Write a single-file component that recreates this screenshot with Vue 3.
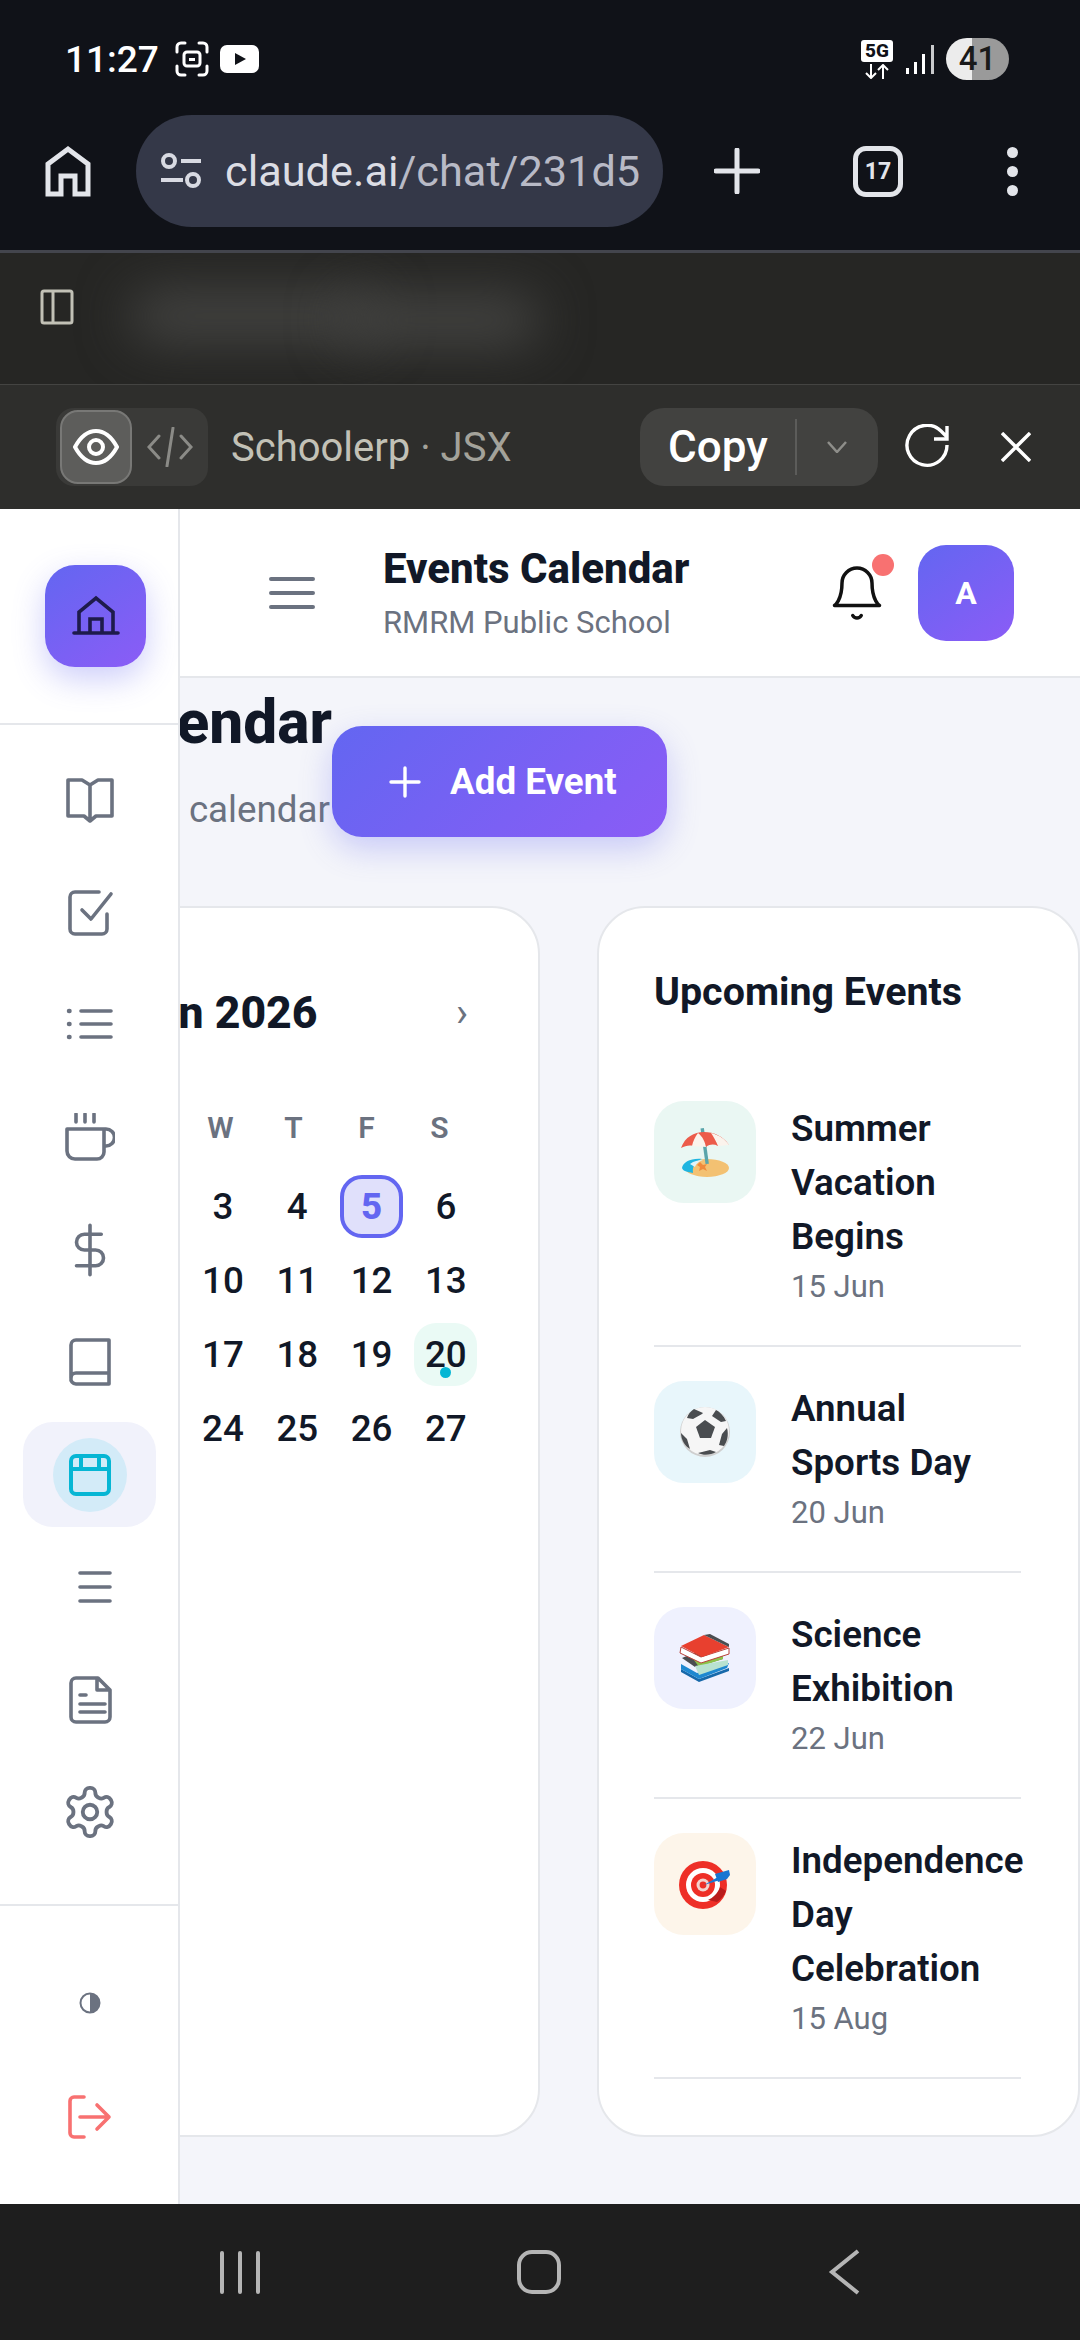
<script setup>
const days = [null, ...Array.from({ length: 30 }, (_, i) => i + 1)]
const weekdays = ['S', 'M', 'T', 'W', 'T', 'F', 'S']
const events = [
  { id: 'beach', tint: 'mint', lines: ['Summer', 'Vacation', 'Begins'], date: '15 Jun' },
  { id: 'ball', tint: 'sky', lines: ['Annual', 'Sports Day'], date: '20 Jun' },
  { id: 'books', tint: 'lilac', lines: ['Science', 'Exhibition'], date: '22 Jun' },
  { id: 'target', tint: 'cream', lines: ['Independence', 'Day', 'Celebration'], date: '15 Aug' }
]
</script>

<template>
  <div class="phone">
    <div class="status">
      <div class="status-left">
        <span class="time">11:27</span>
        <svg class="shot" width="34" height="36" viewBox="0 0 34 36" fill="none" stroke="#fff" stroke-width="3" stroke-linecap="round">
          <path d="M2 11V6a4 4 0 0 1 4-4h4M24 2h4a4 4 0 0 1 4 4v5M32 25v5a4 4 0 0 1-4 4h-4M10 34H6a4 4 0 0 1-4-4v-5" />
          <rect x="9" y="11" width="16" height="14" rx="3" />
          <path d="M14 20h6v-3h-6z" fill="#fff" stroke="none" />
        </svg>
        <svg class="yt" width="39" height="28" viewBox="0 0 39 28">
          <rect width="39" height="28" rx="7" fill="#fff" />
          <path d="M15 8l11 6-11 6z" fill="#101218" />
        </svg>
      </div>
      <div class="status-right">
        <div class="net">
          <span class="five-g">5G</span>
          <svg width="26" height="15" viewBox="0 0 26 15" fill="none" stroke="#fff" stroke-width="2">
            <path d="M7 0v14M2 9l5 5 5-5M19 15V1M14 6l5-5 5 5" />
          </svg>
        </div>
        <svg class="signal" width="29" height="30" viewBox="0 0 29 30" fill="#fff">
          <rect x="0" y="24" width="3" height="6" />
          <rect x="8" y="18" width="3" height="12" />
          <rect x="16" y="10" width="3" height="20" />
          <rect x="25" y="1" width="3" height="29" fill="#c9cacc" />
        </svg>
        <div class="battery"><span>41</span></div>
      </div>
    </div>

    <div class="toolbar">
      <svg class="tb-home" width="46" height="52" viewBox="0 0 46 52" fill="none" stroke="#e3e5ea" stroke-width="5">
        <path d="M3 49V19L23 4l20 15v30H30V31H16v18z" />
      </svg>
      <div class="pill">
        <svg width="42" height="38" viewBox="0 0 42 38" fill="none" stroke="#d8dae2" stroke-width="4">
          <circle cx="9" cy="9" r="6" />
          <path d="M21 9h20M1 28h22" />
          <circle cx="33" cy="28" r="6" />
        </svg>
        <span class="url"><b>claude.ai</b>/chat/231d5</span>
      </div>
      <svg class="tb-plus" width="46" height="46" viewBox="0 0 46 46" stroke="#e3e5ea" stroke-width="5" stroke-linecap="round">
        <path d="M23 2v42M2 23h42" />
      </svg>
      <div class="tabs">17</div>
      <div class="dots"><i></i><i></i><i></i></div>
    </div>

    <div class="blur-row">
      <svg width="34" height="36" viewBox="0 0 34 36" fill="none" stroke="#c2c1b6" stroke-width="3">
        <rect x="2" y="2" width="30" height="32" rx="2" />
        <path d="M13 2v32" />
      </svg>
      <div class="blob"></div>
      <div class="blob second"></div>
    </div>

    <div class="artifact-bar">
      <div class="toggle">
        <div class="toggle-on">
          <svg width="46" height="36" viewBox="0 0 46 36" fill="none" stroke="#fff" stroke-width="4">
            <path d="M2 18C8 7 15 2 23 2s15 5 21 16c-6 11-13 16-21 16S8 29 2 18z" />
            <circle cx="23" cy="18" r="7" />
          </svg>
        </div>
        <svg class="code" width="46" height="40" viewBox="0 0 46 40" fill="none" stroke="#8b8b87" stroke-width="3" stroke-linecap="round">
          <path d="M12 9L2 20l10 11M34 9l10 11-10 11M26 1l-6 38" />
        </svg>
      </div>
      <span class="art-name">Schoolerp<span class="art-type"> · JSX</span></span>
      <div class="copy">
        <span class="copy-label">Copy</span>
        <svg width="20" height="12" viewBox="0 0 20 12" fill="none" stroke="#8e8e8a" stroke-width="2.5">
          <path d="M1 1l9 10 9-10" />
        </svg>
      </div>
      <svg class="refresh" width="46" height="46" viewBox="0 0 46 46" fill="none" stroke="#fff" stroke-width="3.4">
        <path d="M42 21a20 20 0 1 1-6-14l6 6M42 2v13H29" />
      </svg>
      <svg class="close" width="30" height="30" viewBox="0 0 30 30" fill="none" stroke="#fff" stroke-width="3.4">
        <path d="M1 1l28 28M29 1L1 29" />
      </svg>
    </div>

    <div class="app">
      <aside class="side">
        <div class="logo-wrap">
          <div class="logo">
            <svg width="50" height="42" viewBox="0 0 50 42" fill="none" stroke="#1e1b4b" stroke-width="3.6" stroke-linecap="round">
              <path d="M3 38h44M8 38V17L25 3l17 14v21M19 38V24h12v14" />
            </svg>
          </div>
        </div>
        <nav class="nav">
          <div class="nav-item">
            <svg class="ic" width="50" height="50" viewBox="0 2 50 50"><path d="M3 6h14l8 5 8-5h14v36H31l-6 5-6-5H3zM25 11v34" /></svg>
          </div>
          <div class="nav-item">
            <svg class="ic" width="50" height="50" viewBox="0 0 50 50"><path d="M42 26v15a5 5 0 0 1-5 5H10a5 5 0 0 1-5-5V9a5 5 0 0 1 5-5h24M46 6L26 31l-9-9" /></svg>
          </div>
          <div class="nav-item">
            <svg class="ic" width="50" height="50" viewBox="1 0 50 50"><path d="M17 11h30M17 24h30M17 37h30" /><path d="M5 11h.5M5 24h.5M5 37h.5" stroke-width="4.5" /></svg>
          </div>
          <div class="nav-item">
            <svg class="ic" width="50" height="50" viewBox="0 1 50 50"><path d="M11 2v8M20 2v8M29 2v8M2 17h37v23a7 7 0 0 1-7 7H10a8 8 0 0 1-8-8zM39 17h2a8.5 8.5 0 0 1 0 17h-2" /></svg>
          </div>
          <div class="nav-item">
            <svg class="ic thin" width="54" height="54" viewBox="0 0 24 24"><path d="M12 1v22M17 5H9.5a3.5 3.5 0 0 0 0 7h5a3.5 3.5 0 0 1 0 7H6" /></svg>
          </div>
          <div class="nav-item">
            <svg class="ic" width="50" height="50" viewBox="0 0 50 50"><path d="M6 41V8a5 5 0 0 1 5-5h33v44H11a5 5 0 0 1-5-6 5 5 0 0 1 5-5h33" /></svg>
          </div>
          <div class="nav-item active">
            <div class="nav-circle">
              <svg width="42" height="42" viewBox="0 0 42 42" fill="none" stroke="#06b6d4" stroke-width="4">
                <rect x="2" y="2" width="38" height="38" rx="5" />
                <path d="M2 15h38M12 2v13M30 2v13" />
              </svg>
            </div>
          </div>
          <div class="nav-item">
            <svg class="ic nudge" width="34" height="34" viewBox="0 0 34 34"><path d="M2 3h30M2 17h30M2 31h30" /></svg>
          </div>
          <div class="nav-item">
            <svg class="ic" width="50" height="50" viewBox="0 0 50 50"><path d="M11 3h22l12 12v27a5 5 0 0 1-5 5H11a5 5 0 0 1-5-5V8a5 5 0 0 1 5-5zM32 3v12h13M15 20h6M15 29h25M15 37h25" /></svg>
          </div>
          <div class="nav-item">
            <svg class="ic thin" width="58" height="58" viewBox="0 0 24 24"><path d="M12.22 2h-.44a2 2 0 0 0-2 2v.18a2 2 0 0 1-1 1.73l-.43.25a2 2 0 0 1-2 0l-.15-.08a2 2 0 0 0-2.73.73l-.22.38a2 2 0 0 0 .73 2.73l.15.1a2 2 0 0 1 1 1.72v.51a2 2 0 0 1-1 1.74l-.15.09a2 2 0 0 0-.73 2.73l.22.38a2 2 0 0 0 2.73.73l.15-.08a2 2 0 0 1 2 0l.43.25a2 2 0 0 1 1 1.73V20a2 2 0 0 0 2 2h.44a2 2 0 0 0 2-2v-.18a2 2 0 0 1 1-1.73l.43-.25a2 2 0 0 1 2 0l.15.08a2 2 0 0 0 2.73-.73l.22-.39a2 2 0 0 0-.73-2.73l-.15-.08a2 2 0 0 1-1-1.74v-.5a2 2 0 0 1 1-1.74l.15-.09a2 2 0 0 0 .73-2.73l-.22-.38a2 2 0 0 0-2.73-.73l-.15.08a2 2 0 0 1-2 0l-.43-.25a2 2 0 0 1-1-1.73V4a2 2 0 0 0-2-2z" /><circle cx="12" cy="12" r="3" /></svg>
          </div>
        </nav>
        <div class="side-bottom">
          <div class="nav-item">
            <svg width="22" height="22" viewBox="0 0 22 22">
              <circle cx="11" cy="11" r="9.5" fill="none" stroke="#6b7280" stroke-width="2" />
              <path d="M11 1.5a9.5 9.5 0 0 1 0 19z" fill="#6b7280" />
            </svg>
          </div>
          <div class="nav-item">
            <svg class="ic logout" width="46" height="46" viewBox="1 0 46 46"><path d="M18 3H8a4 4 0 0 0-4 4v32a4 4 0 0 0 4 4h10M14 23h29M31 11l12 12-12 12" /></svg>
          </div>
        </div>
      </aside>

      <main class="main">
        <header class="top">
          <svg width="46" height="34" viewBox="0 0 46 34" stroke="#6b7280" stroke-width="4" stroke-linecap="round">
            <path d="M2 3h42M2 17h42M2 31h42" />
          </svg>
          <div class="top-text">
            <div class="top-title">Events Calendar</div>
            <div class="top-sub">RMRM Public School</div>
          </div>
          <div class="bell">
            <svg width="60" height="60" viewBox="0 0 24 24" fill="none" stroke="#111" stroke-width="1.4" stroke-linecap="round" stroke-linejoin="round">
              <path d="M6 8a6 6 0 0 1 12 0c0 7 3 9 3 9H3s3-2 3-9M10.3 21a1.94 1.94 0 0 0 3.4 0" />
            </svg>
            <span class="bell-dot"></span>
          </div>
          <div class="avatar">A</div>
        </header>

        <div class="body">
          <div class="page-head">
            <div class="page-title">
              <h1>Events Calendar</h1>
              <p>School calendar</p>
            </div>
            <button class="add">
              <svg width="32" height="32" viewBox="0 0 32 32" stroke="#fff" stroke-width="3.4" stroke-linecap="round">
                <path d="M16 2v28M2 16h28" />
              </svg>
              <span>Add Event</span>
            </button>
          </div>

          <div class="cards">
            <section class="card calendar">
              <div class="month">
                <span class="arrow">‹</span>
                <span class="month-name">Jun 2026</span>
                <span class="arrow">›</span>
              </div>
              <div class="week">
                <span v-for="(d, i) in weekdays" :key="i">{{ d }}</span>
              </div>
              <div class="days">
                <div v-for="(d, i) in days" :key="i" class="day" :class="{ today: d === 5, event: d === 20 }">
                  {{ d }}
                  <span v-if="d === 20" class="day-dot"></span>
                </div>
              </div>
            </section>

            <section class="card upcoming">
              <h2>Upcoming Events</h2>
              <div v-for="e in events" :key="e.id" class="event-row">
                <div class="event-icon" :class="e.tint">
                  <svg v-if="e.id === 'beach'" width="52" height="52" viewBox="0 0 52 52">
                    <ellipse cx="28" cy="42" rx="22" ry="9" fill="#f3c172" />
                    <path d="M3 42c1-6 9-10 20-9-7 2-10 8-9 14-6-1-10-2-11-5z" fill="#1fb5e0" />
                    <path d="M11 38c4-3 8-4 13-4-5 2-7 4-8 7z" fill="#dff3fa" />
                    <path d="M21 36l3 3 4-1-2 3 2 4-4-2-4 2 1-4-3-2z" fill="#f08a3c" />
                    <rect x="24" y="2" width="3.4" height="36" fill="#5aa5ab" transform="rotate(-8 26 20)" />
                    <path d="M2 22C6 11 15 6 25 6s19 4 25 13c-4-2-7-2-11 1-4-2-8-2-12 1-5-3-9-3-13-1-4-1-8 0-12 2z" fill="#ec5b4a" />
                    <path d="M19 7c-3 4-5 8-6 13l14 1c-1-5-3-10-8-14zM32 7c2 3 5 8 7 13l11-1c-4-6-10-10-18-12z" fill="#fbf3ec" />
                  </svg>
                  <svg v-else-if="e.id === 'ball'" width="52" height="52" viewBox="0 0 52 52">
                    <circle cx="26" cy="26" r="25" fill="#cfcfcf" />
                    <circle cx="26" cy="25" r="24" fill="#f6f6f6" />
                    <path d="M17 21l9-7 10 7-4 11H21z" fill="#4a4d50" />
                    <path d="M15 3l9 4-1 1-9 5-6-1c1-4 4-7 7-9zM37 4c4 2 8 6 10 11l-5 1-9-6zM2 27l6 6 3 10c-5-3-9-9-9-16zM48 22c2 7 0 14-3 18l-5-1 3-11zM19 47l12-3 6 2c-5 3-12 4-18 1z" fill="#4a4d50" />
                  </svg>
                  <svg v-else-if="e.id === 'books'" width="52" height="52" viewBox="0 0 52 52">
                    <path d="M2 37l18 10 30-11v3L20 50 2 40z" fill="#1769aa" />
                    <path d="M2 32l16 9 32-10-2 5-28 11L2 37z" fill="#1e88d0" />
                    <path d="M3 26l14-6 27 7-28 8z" fill="#4a4d50" />
                    <path d="M15 28l29-6v5l-24 8z" fill="#8bc34a" />
                    <path d="M16 34l33-6v5L20 43z" fill="#b8e2d0" />
                    <path d="M2 15l20 10 28-9v6L22 31 1 21z" fill="#fff" stroke="#b9413a" stroke-width="1" />
                    <path d="M2 14L25 3l25 12-27 10z" fill="#e8402f" />
                    <path d="M25 3l6-1 19 10v3z" fill="#4a4d50" />
                  </svg>
                  <svg v-else width="52" height="52" viewBox="0 0 52 52">
                    <circle cx="24" cy="27" r="24" fill="#ee2f27" />
                    <circle cx="24" cy="27" r="17" fill="#fff" />
                    <circle cx="24" cy="27" r="12" fill="#ee2f27" />
                    <circle cx="24" cy="27" r="6.5" fill="#f3d3cf" />
                    <circle cx="24" cy="27" r="3.4" fill="#ee2f27" />
                    <path d="M38 44a24 24 0 0 0 9-11l-6-4c-2 6-7 11-12 13z" fill="#b91c1c" />
                    <path d="M25 27l14-8 2 3z" fill="#1976d2" />
                    <path d="M36 16l14-4 1 5-3 4-9 3z" fill="#1976d2" />
                  </svg>
                </div>
                <div class="event-text">
                  <div class="event-title"><div v-for="l in e.lines" :key="l">{{ l }}</div></div>
                  <div class="event-date">{{ e.date }}</div>
                </div>
              </div>
            </section>
          </div>
        </div>
      </main>
    </div>

    <footer class="navbar">
      <div class="bars"><i></i><i></i><i></i></div>
      <div class="square"></div>
      <svg width="32" height="46" viewBox="0 0 32 46" fill="none" stroke="#b5b5b5" stroke-width="4">
        <path d="M30 2L4 23l26 21" />
      </svg>
    </footer>
  </div>
</template>

<style>
html, body { margin: 0; background: #101218; }
</style>

<style scoped>
.phone {
  width: 1080px;
  height: 2340px;
  display: flex;
  flex-direction: column;
  overflow: hidden;
  font-family: Roboto, "Noto Sans", sans-serif;
  color: #111827;
  background: #101218;
}
.status {
  height: 115px;
  padding: 3px 71px 0 65px;
  box-sizing: border-box;
  display: flex;
  align-items: center;
  justify-content: space-between;
  color: #fff;
  flex: none;
}
.status-left, .status-right { display: flex; align-items: center; }
.time { font-size: 37px; font-weight: 500; width: 110px; }
.yt { margin-left: 11px; }
.net { display: flex; flex-direction: column; align-items: center; gap: 2px; width: 32px; }
.five-g {
  background: #fff;
  color: #101218;
  font-size: 19px;
  font-weight: 800;
  line-height: 22px;
  width: 32px;
  text-align: center;
  border-radius: 3px;
}
.signal { margin-left: 13px; }
.battery {
  margin-left: 11px;
  width: 63px;
  height: 42px;
  border-radius: 21px;
  background: linear-gradient(90deg, #ececec 0 41%, #9a9a9a 41% 100%);
  color: #1a1a1a;
  font-size: 33px;
  font-weight: 500;
  line-height: 42px;
  text-align: center;
}
.toolbar {
  height: 138px;
  padding: 0 0 23px 45px;
  box-sizing: border-box;
  display: flex;
  align-items: center;
  flex: none;
  border-bottom: 3px solid #43454d;
}
.pill {
  margin-left: 45px;
  width: 527px;
  height: 112px;
  border-radius: 56px;
  background: #343848;
  display: flex;
  align-items: center;
  padding-left: 24px;
  box-sizing: border-box;
}
.url {
  margin-left: 23px;
  font-size: 43.3px;
  color: #b8bac6;
  white-space: nowrap;
}
.url b { font-weight: 400; color: #dcdde4; }
.tb-plus { margin-left: 51px; }
.tabs {
  margin-left: 93px;
  width: 50px;
  height: 51px;
  box-sizing: border-box;
  border: 5px solid #e3e5ea;
  border-radius: 13px;
  color: #e3e5ea;
  font-size: 23px;
  font-weight: 700;
  display: flex;
  align-items: center;
  justify-content: center;
}
.dots { margin-left: 104px; display: flex; flex-direction: column; gap: 8px; }
.dots i { width: 11px; height: 11px; border-radius: 50%; background: #e3e5ea; display: block; }
.blur-row {
  position: relative;
  height: 132px;
  box-sizing: border-box;
  background: #262624;
  border-bottom: 1px solid #444442;
  padding: 36px 0 0 40px;
  flex: none;
  overflow: hidden;
}
.blob {
  position: absolute;
  left: 130px;
  top: 38px;
  width: 250px;
  height: 50px;
  background: #454543;
  border-radius: 26px;
  filter: blur(26px);
}
.blob.second { left: 340px; width: 200px; top: 42px; }
.artifact-bar {
  height: 124px;
  background: #2e2e2c;
  display: flex;
  align-items: center;
  padding-left: 56px;
  flex: none;
}
.toggle {
  width: 152px;
  height: 78px;
  box-sizing: border-box;
  background: #3a3a38;
  border-radius: 18px;
  padding: 2px 4px;
  display: flex;
  align-items: center;
  flex: none;
}
.toggle-on {
  width: 72px;
  height: 74px;
  box-sizing: border-box;
  background: #5d5d5b;
  border: 2px solid #787876;
  border-radius: 18px;
  display: flex;
  align-items: center;
  justify-content: center;
}
.code { margin-left: 15px; }
.art-name {
  margin-left: 23px;
  font-size: 40px;
  color: #c2c1b6;
  width: 409px;
  white-space: nowrap;
  flex: none;
}
.art-type { color: #a3a29a; }
.copy {
  width: 238px;
  height: 78px;
  background: #424240;
  border-radius: 24px;
  display: flex;
  align-items: center;
  padding-left: 28px;
  box-sizing: border-box;
  flex: none;
}
.copy-label {
  width: 129px;
  height: 56px;
  line-height: 56px;
  border-right: 2px solid #5c5c5a;
  font-size: 44px;
  font-weight: 500;
  color: #fff;
  margin-right: 30px;
  box-sizing: border-box;
}
.refresh { margin-left: 27px; }
.close { margin-left: 50px; }
.app { height: 1695px; display: flex; background: #fff; flex: none; }
.side {
  width: 180px;
  box-sizing: border-box;
  border-right: 2px solid #e5e7eb;
  flex: none;
  display: flex;
  flex-direction: column;
  background: #fff;
  position: relative;
  z-index: 2;
}
.logo-wrap { height: 216px; box-sizing: border-box; padding: 56px 0 0 45px; border-bottom: 2px solid #e5e7eb; }
.logo {
  width: 101px;
  height: 102px;
  border-radius: 30px;
  background: linear-gradient(145deg, #6366f1, #8b5cf6);
  box-shadow: 0 12px 32px rgba(99, 102, 241, .32);
  display: flex;
  align-items: center;
  justify-content: center;
}
.nav {
  height: 1181px;
  box-sizing: border-box;
  padding-top: 23px;
  border-bottom: 2px solid #e5e7eb;
  display: flex;
  flex-direction: column;
  gap: 7.4px;
}
.nav-item {
  height: 105px;
  margin: 0 22px 0 23px;
  display: flex;
  align-items: center;
  justify-content: center;
  flex: none;
  border-radius: 30px;
}
.active { background: #f1f2fb; }
.nav-circle {
  width: 74px;
  height: 74px;
  border-radius: 50%;
  background: #d3ebf8;
  display: flex;
  align-items: center;
  justify-content: center;
}
.ic { fill: none; stroke: #6b7280; stroke-width: 3.6; stroke-linecap: round; stroke-linejoin: round; }
.ic.thin { stroke-width: 1.6; }
.ic.logout { stroke: #f87171; }
.nudge { margin-left: 10px; }
.side-bottom { padding-top: 44px; display: flex; flex-direction: column; gap: 9px; }
.main { flex: 1; min-width: 0; display: flex; flex-direction: column; overflow: hidden; }
.top {
  height: 169px;
  flex: none;
  box-sizing: border-box;
  background: #fff;
  border-bottom: 2px solid #e5e7eb;
  padding: 0 66px 0 89px;
  display: flex;
  align-items: center;
}
.top-text { margin-left: 68px; flex: 1; padding-top: 2px; }
.top-title { font-size: 42px; font-weight: 800; line-height: 52px; color: #111827; }
.top-sub { font-size: 31px; line-height: 44px; margin-top: 6px; color: #6b7280; }
.bell { position: relative; width: 60px; height: 60px; margin-right: 31px; }
.bell svg { display: block; }
.bell-dot {
  position: absolute;
  right: -7px;
  top: -9px;
  width: 22px;
  height: 22px;
  border-radius: 50%;
  background: #f87171;
}
.avatar {
  width: 96px;
  height: 96px;
  border-radius: 28px;
  background: linear-gradient(145deg, #6366f1, #8b5cf6);
  color: #fff;
  font-size: 32px;
  font-weight: 700;
  display: flex;
  align-items: center;
  justify-content: center;
}
.body { flex: 1; background: #f4f5fa; padding-top: 48px; }
.page-head { display: flex; height: 111px; }
.page-title {
  width: 152px;
  flex: none;
  display: flex;
  flex-direction: column;
  align-items: flex-end;
  white-space: nowrap;
}
.page-title h1 {
  margin: -38px 0 0;
  font-size: 60.4px;
  line-height: 70px;
  font-weight: 800;
  color: #111827;
  flex: none;
}
.page-title p {
  margin: 30px 2px 0 0;
  font-size: 36.75px;
  line-height: 44px;
  word-spacing: 3px;
  color: #6b7280;
  flex: none;
}
.add {
  width: 335px;
  height: 111px;
  flex: none;
  border: 0;
  border-radius: 30px;
  background: linear-gradient(135deg, #6366f1, #8b5cf6);
  box-shadow: 0 12px 32px rgba(99, 102, 241, .3);
  color: #fff;
  font-family: inherit;
  font-size: 36.75px;
  font-weight: 700;
  display: flex;
  align-items: center;
  padding: 0 0 0 57px;
  box-sizing: border-box;
  gap: 29px;
}
.cards {
  margin: 69px 0 0 -273px;
  display: flex;
  gap: 57px;
  width: 1173px;
}
.card {
  flex: none;
  box-sizing: border-box;
  background: #fff;
  border: 2px solid #e5e7eb;
  border-radius: 48px;
}
.calendar { width: 633px; padding: 80px 55px 0 54px; }
.month { display: flex; align-items: center; justify-content: space-between; height: 50px; }
.month-name { font-size: 44.6px; font-weight: 800; color: #111827; white-space: nowrap; }
.arrow { width: 42px; text-align: center; font-size: 40px; line-height: 50px; color: #6b7280; }
.week {
  display: grid;
  grid-template-columns: repeat(7, 73px);
  margin: 70px 0 0 2px;
  height: 40px;
  line-height: 40px;
  font-size: 30px;
  font-weight: 600;
  color: #6b7280;
  text-align: center;
}
.days {
  display: grid;
  grid-template-columns: repeat(7, 1fr);
  grid-auto-rows: 63px;
  row-gap: 11px;
  margin-top: 27px;
  font-size: 36.75px;
  font-weight: 500;
  color: #111827;
}
.day {
  position: relative;
  width: 63px;
  height: 63px;
  justify-self: center;
  display: flex;
  align-items: center;
  justify-content: center;
  box-sizing: border-box;
  border-radius: 22px;
}
.today { background: #e0e0fb; border: 4px solid #6366f1; color: #6366f1; font-weight: 800; }
.event { background: #eafaf5; }
.day-dot {
  position: absolute;
  left: 26px;
  top: 44px;
  width: 11px;
  height: 11px;
  border-radius: 50%;
  background: #06b6d4;
}
.upcoming { width: 483px; padding: 60px 57px 56px 55px; }
.upcoming h2 { margin: 1px 0 52px; font-size: 39.4px; line-height: 46px; font-weight: 700; color: #111827; white-space: nowrap; }
.event-row {
  display: flex;
  gap: 35px;
  padding: 35px 0 36px;
  border-bottom: 2px solid #e5e7eb;
  width: 367px;
}
.event-icon {
  width: 102px;
  height: 102px;
  margin-top: -1px;
  flex: none;
  border-radius: 30px;
  display: flex;
  align-items: center;
  justify-content: center;
}
.mint { background: #eaf7f3; }
.sky { background: #e8f6fb; }
.lilac { background: #eff1fe; }
.cream { background: #fdf5ea; }
.event-text { min-width: 0; }
.event-title { font-size: 36.75px; line-height: 54px; font-weight: 600; color: #111827; white-space: nowrap; }
.event-date { font-size: 31px; line-height: 45px; color: #6b7280; }
.navbar {
  flex: 1;
  background: #1e1e1e;
  display: flex;
  align-items: center;
  padding: 0 0 0 220px;
}
.bars { display: flex; gap: 14px; }
.bars i { display: block; width: 4px; height: 43px; border-radius: 2px; background: #b5b5b5; }
.square {
  margin-left: 257px;
  width: 44px;
  height: 44px;
  border: 4px solid #b5b5b5;
  border-radius: 15px;
  box-sizing: border-box;
}
.navbar svg { margin-left: 267px; }
</style>
